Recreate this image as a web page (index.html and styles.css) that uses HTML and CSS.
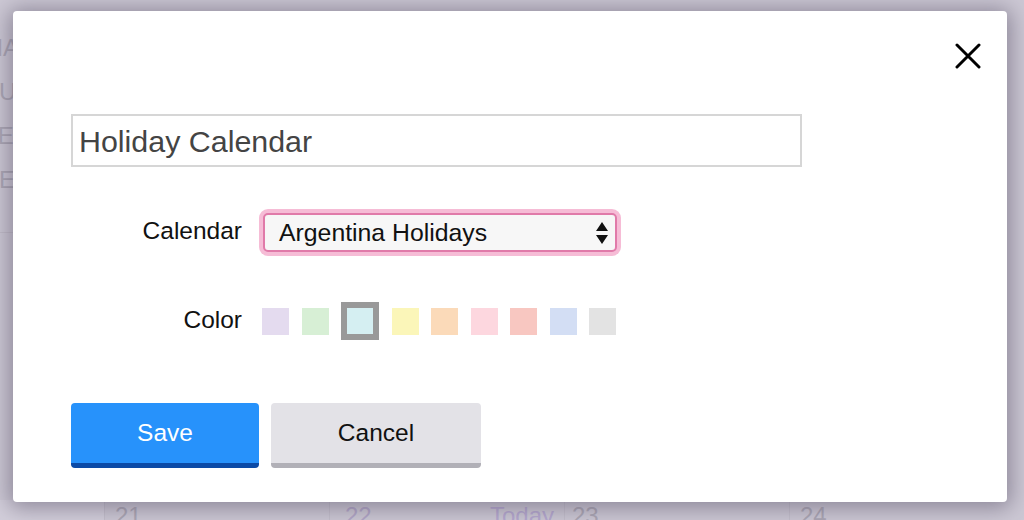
FILE: index.html
```html
<!DOCTYPE html>
<html lang="en">
<head>
<meta charset="utf-8">
<title>Holiday Calendar</title>
<link rel="stylesheet" href="styles.css">
</head>
<body>
<div class="calendar">
  <div class="side">
    <div class="side-item">MA</div>
    <div class="side-item">SU</div>
    <div class="side-item">TE</div>
    <div class="side-item">VE</div>
  </div>
  <div class="week">
    <div class="day d0"></div>
    <div class="day d1"><span class="num">21</span></div>
    <div class="day d2"><span class="num purple">22</span><span class="today">Today</span></div>
    <div class="day d3"><span class="num">23</span></div>
    <div class="day d4"><span class="num">24</span></div>
  </div>
</div>

<div class="modal">
  <div class="modal-head">
    <button class="close" aria-label="Close">
      <svg width="26" height="26" viewBox="0 0 26 26"><path d="M2 2 L24 24 M24 2 L2 24" stroke="#000" stroke-width="3" stroke-linecap="round" fill="none"/></svg>
    </button>
  </div>
  <div class="modal-body">
    <div class="name-input">Holiday Calendar</div>
    <div class="row row-cal">
      <div class="label">Calendar</div>
      <div class="select">
        <span class="select-text">Argentina Holidays</span>
        <svg class="arrows" width="12" height="22" viewBox="0 0 12 22"><path d="M6 0 L12 9 L0 9 Z M0 13 L12 13 L6 22 Z" fill="#111"/></svg>
      </div>
    </div>
    <div class="row row-color">
      <div class="label">Color</div>
      <div class="swatches">
        <span class="swatch c1"></span>
        <span class="swatch c2"></span>
        <span class="swatch c3 selected"></span>
        <span class="swatch c4"></span>
        <span class="swatch c5"></span>
        <span class="swatch c6"></span>
        <span class="swatch c7"></span>
        <span class="swatch c8"></span>
        <span class="swatch c9"></span>
      </div>
    </div>
    <div class="buttons">
      <button class="btn btn-save">Save</button>
      <button class="btn btn-cancel">Cancel</button>
    </div>
  </div>
</div>
</body>
</html>
```
FILE: styles.css
```css
* { box-sizing: border-box; }
html, body {
  margin: 0;
  padding: 0;
  width: 1024px;
  height: 520px;
  overflow: hidden;
}
body {
  background: #cdc9d5;
  font-family: "Liberation Sans", Arial, sans-serif;
  position: relative;
}

/* background page */
.calendar {
  width: 1024px;
  height: 520px;
  display: flex;
  flex-direction: column;
  justify-content: space-between;
  color: #aca8b5;
}
.side {
  padding-top: 34px;
  display: flex;
  flex-direction: column;
  width: 80px;
  border-bottom: 1px solid #c2bdc9;
  padding-bottom: 22px;
}
.side-item {
  font-size: 24px;
  height: 44px;
  line-height: 28px;
  margin-left: -17px;
}
.week {
  display: flex;
  height: 20px;
}
.day {
  position: relative;
  border-right: 1px solid #c4c0cc;
  font-size: 24px;
  line-height: 28px;
  padding-top: 2px;
}
.d0 { width: 105px; background: #d3cfdb; }
.d1 { width: 225px; padding-left: 10px; }
.d2 { width: 235px; padding-left: 15px; display: flex; justify-content: space-between; padding-right: 10px; }
.d3 { width: 225px; padding-left: 7px; }
.d4 { flex: 1; padding-left: 10px; border-right: 0; }
.purple { color: #b3a8c8; }
.today { color: #b6aad0; }

/* modal */
.modal {
  position: absolute;
  left: 13px;
  top: 11px;
  width: 994px;
  height: 491px;
  background: #fff;
  border-radius: 4px;
  box-shadow: 0 2px 22px 4px rgba(60, 50, 75, 0.45);
}
.modal-head {
  display: flex;
  justify-content: flex-end;
  padding: 32px 26px 0 0;
}
.close {
  border: 0;
  background: none;
  padding: 0;
  margin: 0;
  width: 26px;
  height: 26px;
  display: block;
}
.close svg { display: block; }

.modal-body {
  padding: 45px 58px 0 58px;
}
.name-input {
  width: 731px;
  height: 53px;
  border: 2px solid #d6d6d6;
  font-size: 30.4px;
  color: #444;
  padding: 2px 0 0 6px;
  line-height: 47px;
}

.row {
  display: flex;
  align-items: center;
}
.label {
  width: 171px;
  text-align: right;
  font-size: 24.5px;
  color: #111;
  margin-top: -3px;
}
.row-cal {
  margin-top: 46px;
  height: 39px;
}
.select {
  margin-left: 21px;
  width: 354px;
  height: 39px;
  border: 2px solid #e07aa9;
  border-radius: 5px;
  background: #f7f7f7;
  box-shadow: 0 0 0 4px #f6bcd6;
  display: flex;
  align-items: center;
  justify-content: space-between;
  padding: 0 7px 0 14px;
}
.select-text {
  font-size: 24.8px;
  color: #111;
}
.arrows { display: block; margin-top: 1px; }

.row-color {
  margin-top: 50px;
  height: 38px;
}
.swatches {
  margin-left: 20px;
  display: flex;
  align-items: center;
  gap: 12.5px;
}
.swatch {
  display: block;
  width: 27px;
  height: 27px;
}
.swatch.selected {
  width: 38px;
  height: 38px;
  border: 6px solid #999;
}
.c1 { background: #e4dbef; }
.c2 { background: #d7efd5; }
.c3 { background: #d5eff2; }
.c4 { background: #fbf6b9; }
.c5 { background: #fbdab9; }
.c6 { background: #fdd7df; }
.c7 { background: #f8c7c1; }
.c8 { background: #d3def4; }
.c9 { background: #e3e3e3; }

.buttons {
  margin-top: 63px;
  display: flex;
  gap: 12px;
}
.btn {
  font-family: "Liberation Sans", Arial, sans-serif;
  font-size: 24.5px;
  height: 65px;
  border: 0;
  border-radius: 4px;
  padding: 0;
  margin: 0;
}
.btn-save {
  width: 188px;
  background: #2792fb;
  color: #fff;
  border-bottom: 5px solid #0b4aa6;
}
.btn-cancel {
  width: 210px;
  background: #e3e2e7;
  color: #111;
  border-bottom: 5px solid #b1b0b7;
}
```
